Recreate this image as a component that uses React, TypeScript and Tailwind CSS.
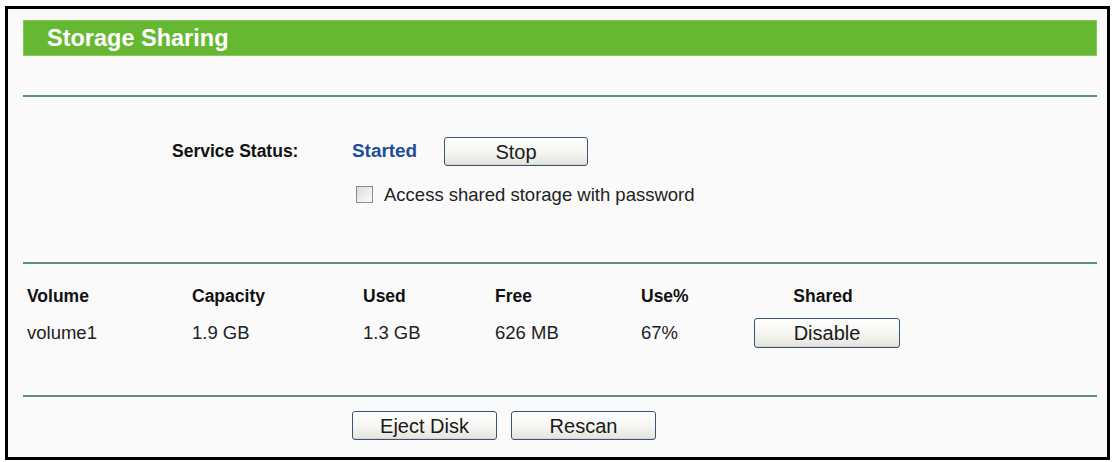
import React from "react";

const font = { fontFamily: '"Liberation Sans", Arial, sans-serif' };

function Btn({ label, w, h }: { label: string; w: string; h: string }) {
  return (
    <div
      className={`${w} ${h} flex items-center justify-center rounded-[3px] border border-[#3a5573] bg-gradient-to-b from-[#fefefe] via-[#f6f6f2] to-[#e4e3dc] text-[20px] text-[#1a1a1a] shadow-[inset_0_-1px_0_#d6d4cc]`}
    >
      {label}
    </div>
  );
}

export default function App() {
  const cols = ["w-[165px]", "w-[171px]", "w-[132px]", "w-[146px]", "w-[113px]"];
  const headers = ["Volume", "Capacity", "Used", "Free", "Use%"];
  const data = ["volume1", "1.9 GB", "1.3 GB", "626 MB", "67%"];
  return (
    <div className="w-[1112px] h-[462px] bg-white pt-[6px] pl-[5px]" style={font}>
      <div className="w-[1105px] h-[454px] border-[3px] border-black bg-[#fafafa] flex flex-col">
        <div className="ml-[15px] mt-[11px] w-[1074px] h-[36px] bg-[#66b832] border border-[#82cc57] flex items-center pl-[23px]">
          <span className="text-white font-bold text-[23.5px] leading-[34px]">Storage Sharing</span>
        </div>
        <div className="ml-[15px] mt-[39px] w-[1074px] h-[2px] bg-[#5e8f78]" />

        <div className="mt-[40px] h-[29px] flex items-center pl-[164px]">
          <div className="w-[180px] font-bold text-[17.5px] text-[#111]">Service Status:</div>
          <div className="w-[92px] font-bold text-[18.9px] text-[#1f4c98]">Started</div>
          <Btn label="Stop" w="w-[144px]" h="h-[29px]" />
        </div>

        <div className="mt-[20px] h-[17px] flex items-center pl-[348px]">
          <div className="w-[17px] h-[17px] border border-[#7d8fa3] bg-gradient-to-br from-[#dcdcd6] to-[#fbfbf9]" />
          <span className="ml-[11px] text-[18.5px] text-[#222]">Access shared storage with password</span>
        </div>

        <div className="ml-[15px] mt-[59px] w-[1074px] h-[2px] bg-[#5e8f78]" />

        <div className="mt-[22px] h-[20px] flex items-center pl-[19px] font-bold text-[17.5px] text-[#111]">
          {headers.map((h, i) => (
            <div key={h} className={cols[i]}>
              {h}
            </div>
          ))}
          <div className="w-[146px] text-center pr-[8px]">Shared</div>
        </div>

        <div className="mt-[12px] h-[30px] flex items-center pl-[19px] text-[18.5px] text-[#222]">
          {data.map((d, i) => (
            <div key={d} className={cols[i]}>
              {d}
            </div>
          ))}
          <Btn label="Disable" w="w-[146px]" h="h-[30px]" />
        </div>

        <div className="ml-[15px] mt-[47px] w-[1074px] h-[2px] bg-[#5e8f78]" />

        <div className="mt-[14px] flex items-center pl-[344px] gap-[14px]">
          <Btn label="Eject Disk" w="w-[145px]" h="h-[29px]" />
          <Btn label="Rescan" w="w-[145px]" h="h-[29px]" />
        </div>
      </div>
    </div>
  );
}
